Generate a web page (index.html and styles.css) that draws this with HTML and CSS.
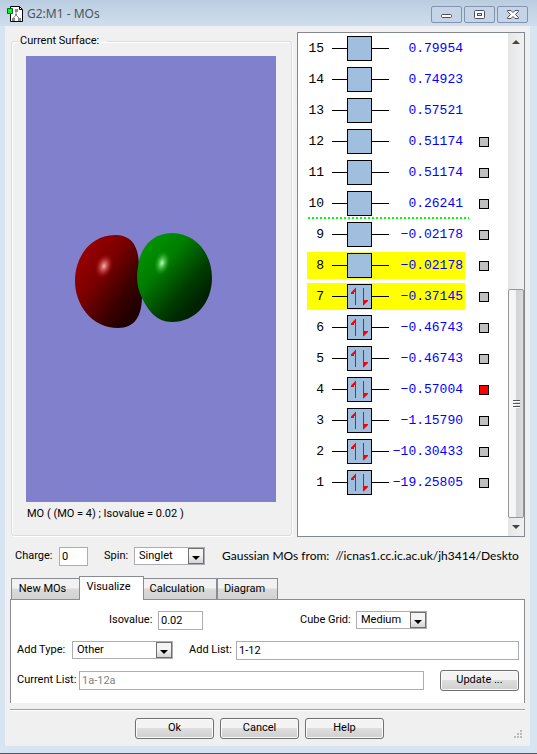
FILE: index.html
```html
<!DOCTYPE html>
<html lang="en">
<head>
<meta charset="utf-8">
<title>G2:M1 - MOs</title>
<link rel="stylesheet" href="styles.css">
</head>
<body>
<div class="window">
  <header class="titlebar">
    <svg class="app-icon" width="17" height="17" viewBox="0 0 17 17" aria-hidden="true">
      <path d="M3.5.5h9l3 3v12h-12z" fill="#fff" stroke="#000"/>
      <path d="M12.500 .5v3h3" fill="none" stroke="#000"/>
      <path d="M9 5v4L5.500 13M9 9l4 4" fill="none" stroke="#888"/>
      <path d="M8 3h3v3H8zM8 8h2v2H8zM5 12h3v3H5zM11 12h3v3h-3z" fill="#888"/>
      <path d="M.5 2.500h5v5h-5z" fill="#0f0" stroke="#063"/>
    </svg>
    <h1 class="title">G2:M1 - MOs</h1>
    <button class="caption" aria-label="Minimize"><svg width="29" height="15" viewBox="0 0 29 15"><rect x="9.500" y="7.500" width="10" height="3" rx="1" fill="#fff" stroke="#4c4f5c"/></svg></button>
    <button class="caption" aria-label="Maximize"><svg width="29" height="15" viewBox="0 0 29 15"><rect x="9.500" y="3.500" width="10" height="8" rx="1" fill="#fff" stroke="#4c4f5c"/><rect x="12.500" y="6.500" width="4" height="2" fill="#dde6f0" stroke="#4c4f5c"/></svg></button>
    <button class="caption" aria-label="Close"><svg width="29" height="15" viewBox="0 0 29 15"><path d="M9.500 3.500h3.500l2 2 2-2h3.500v1l-3 3 3 3v1H17l-2-2-2 2H9.500v-1l3-3-3-3z" fill="#fff" stroke="#4c4f5c"/></svg></button>
  </header>

  <main class="content">
    <section class="views">
      <fieldset class="surface">
        <legend>Current Surface:</legend>
        <svg class="scene" viewBox="0 0 250 446" role="img" aria-label="Orbital surface">
          <defs>
            <linearGradient id="red" x1=".15" y1=".15" x2=".85" y2=".85">
              <stop offset="0" stop-color="#980000"/><stop offset=".35" stop-color="#7c0000"/><stop offset=".75" stop-color="#3c0000"/><stop offset="1" stop-color="#200000"/>
            </linearGradient>
            <linearGradient id="green" x1=".15" y1=".1" x2=".8" y2=".8">
              <stop offset="0" stop-color="#009400"/><stop offset=".35" stop-color="#007c00"/><stop offset=".75" stop-color="#003c00"/><stop offset="1" stop-color="#002200"/>
            </linearGradient>
            <radialGradient id="red-glow"><stop offset="0" stop-color="#ffb0b0"/><stop offset=".4" stop-color="#d86060" stop-opacity=".7"/><stop offset="1" stop-color="#900" stop-opacity="0"/></radialGradient>
            <radialGradient id="green-glow"><stop offset="0" stop-color="#c0ffc0"/><stop offset=".4" stop-color="#60d060" stop-opacity=".7"/><stop offset="1" stop-color="#090" stop-opacity="0"/></radialGradient>
          </defs>
          <rect width="250" height="446" fill="#8080cc"/>
          <path d="M49 225C49 199 66 179 89 179C106 179 112 190 113 208C114 220 116 226 116 240C116 260 109 272 92 272C66 272 49 249 49 225Z" fill="url(#red)"/>
          <path d="M112 211C114 191 127 177 146 177C169 177 186 197 186 222C186 247 169 266 146 266C130 266 122 254 116 242C111 232 110 221 112 211Z" fill="url(#green)"/>
          <ellipse cx="78" cy="210" rx="9" ry="13" transform="rotate(20 78 210)" fill="url(#red-glow)"/>
          <ellipse cx="136" cy="207" rx="8" ry="13" transform="rotate(15 136 207)" fill="url(#green-glow)"/>
        </svg>
        <p class="scene-caption">MO ( (MO = 4) ; Isovalue = 0.02 )</p>
      </fieldset>

      <section class="levels">
        <svg class="defs" width="0" height="0" aria-hidden="true">
          <symbol id="empty" viewBox="0 0 57 25"><path d="M0 12.500h57" stroke="#000"/><rect x="15.500" y=".5" width="24" height="24" fill="#a0bede" stroke="#000"/></symbol>
          <symbol id="pair" viewBox="0 0 57 25"><path d="M0 12.500h57" stroke="#000"/><rect x="15.500" y=".5" width="24" height="24" fill="#a0bede" stroke="#000"/><path d="M23 4h1v17h-1zM31 4h1v17h-1z" fill="red"/><path d="M24 3.500v4.500h-2v2h-3V8.500zM31 21.500V16h5v1l-4 4z" fill="red"/></symbol>
        </svg>
        <ol class="orbitals">
          <li><span class="level"><b>15</b><svg><use href="#empty"/></svg><data>0.79954</data></span></li>
          <li><span class="level"><b>14</b><svg><use href="#empty"/></svg><data>0.74923</data></span></li>
          <li><span class="level"><b>13</b><svg><use href="#empty"/></svg><data>0.57521</data></span></li>
          <li><span class="level"><b>12</b><svg><use href="#empty"/></svg><data>0.51174</data></span><input type="checkbox" aria-label="Orbital 12"></li>
          <li><span class="level"><b>11</b><svg><use href="#empty"/></svg><data>0.51174</data></span><input type="checkbox" aria-label="Orbital 11"></li>
          <li class="divided"><span class="level"><b>10</b><svg><use href="#empty"/></svg><data>0.26241</data></span><input type="checkbox" aria-label="Orbital 10"></li>
          <li><span class="level"><b>9</b><svg><use href="#empty"/></svg><data>−0.02178</data></span><input type="checkbox" aria-label="Orbital 9"></li>
          <li><span class="level marked"><b>8</b><svg><use href="#empty"/></svg><data>−0.02178</data></span><input type="checkbox" aria-label="Orbital 8"></li>
          <li><span class="level marked"><b>7</b><svg><use href="#pair"/></svg><data>−0.37145</data></span><input type="checkbox" aria-label="Orbital 7"></li>
          <li><span class="level"><b>6</b><svg><use href="#pair"/></svg><data>−0.46743</data></span><input type="checkbox" aria-label="Orbital 6"></li>
          <li><span class="level"><b>5</b><svg><use href="#pair"/></svg><data>−0.46743</data></span><input type="checkbox" aria-label="Orbital 5"></li>
          <li><span class="level"><b>4</b><svg><use href="#pair"/></svg><data>−0.57004</data></span><input type="checkbox" aria-label="Orbital 4" checked></li>
          <li><span class="level"><b>3</b><svg><use href="#pair"/></svg><data>−1.15790</data></span><input type="checkbox" aria-label="Orbital 3"></li>
          <li><span class="level"><b>2</b><svg><use href="#pair"/></svg><data>−10.30433</data></span><input type="checkbox" aria-label="Orbital 2"></li>
          <li><span class="level"><b>1</b><svg><use href="#pair"/></svg><data>−19.25805</data></span><input type="checkbox" aria-label="Orbital 1"></li>
        </ol>
        <div class="scrollbar">
          <svg width="16" height="18" viewBox="0 0 16 18"><path d="M8 7l4 4H4z" fill="#444"/></svg>
          <span class="track"><span class="thumb"><i></i><i></i><i></i></span></span>
          <svg width="16" height="18" viewBox="0 0 16 18"><path d="M4 7h8l-4 4z" fill="#444"/></svg>
        </div>
      </section>
    </section>

    <div class="line state">
      <label for="charge">Charge:</label>
      <input class="box charge" id="charge" value="0">
      <label for="spin">Spin:</label>
      <span class="drop"><select id="spin"><option>Singlet</option></select><i></i></span>
      <p class="source">Gaussian MOs from:&nbsp; //icnas1.cc.ic.ac.uk/jh3414/Desktop</p>
    </div>

    <nav class="tabs" role="tablist">
      <button class="tab new" role="tab">New MOs</button>
      <button class="tab current" role="tab" aria-selected="true">Visualize</button>
      <button class="tab calc" role="tab">Calculation</button>
      <button class="tab diagram" role="tab">Diagram</button>
    </nav>

    <section class="panel">
      <div class="line first">
        <label for="iso">Isovalue:</label>
        <input class="box iso" id="iso" value="0.02">
        <label class="grid-label" for="grid">Cube Grid:</label>
        <span class="drop"><select id="grid"><option>Medium</option></select><i></i></span>
      </div>
      <div class="line">
        <label class="add-label" for="type">Add Type:</label>
        <span class="drop wide"><select id="type"><option>Other</option></select><i></i></span>
        <label class="list-label" for="list">Add List:</label>
        <input class="box grow" id="list" value="1-12">
      </div>
      <div class="line">
        <label class="current-label" for="current">Current List:</label>
        <input class="box grow" id="current" value="1a-12a" disabled>
        <button class="push update">Update ...</button>
      </div>
    </section>

    <footer class="actions">
      <button class="push">Ok</button>
      <button class="push">Cancel</button>
      <button class="push">Help</button>
      <svg class="grip" width="9" height="9" viewBox="0 0 9 9" aria-hidden="true"><path d="M6 0h2v2H6zM3 3h2v2H3zM6 3h2v2H6zM0 6h2v2H0zM3 6h2v2H3zM6 6h2v2H6z" fill="#bbb"/></svg>
    </footer>
  </main>
</div>
</body>
</html>
```
FILE: styles.css
```css
* { box-sizing: border-box; }
body {
  margin: 0;
  background: #d7e4f2;
  color: #000;
  font: 11px/14px Roboto, "Liberation Sans", Arial, sans-serif;
}
input, select, button { font: inherit; color: inherit; margin: 0; }
p, h1, ol { margin: 0; padding: 0; }
svg { display: block; }
label { white-space: nowrap; }

.window { border-bottom: 1px solid #50545c; padding: 0 7px 7px 5px; }
.titlebar {
  display: flex;
  align-items: center;
  gap: 2px;
  height: 26px;
  margin: 0 -7px 0 -5px;
  padding: 2px 9px 0 7px;
  background: linear-gradient(#bacde0, #cfdeee);
}
.app-icon { margin-right: 1px; }
.title { flex: 1; font: 12px/16px "Noto Sans", sans-serif; color: #4d5560; }
.caption {
  width: 31px;
  height: 17px;
  padding: 0;
  border: 1px solid #8493ad;
  border-radius: 2px;
  background: #c5d5e7;
}

.content { background: #f0f0f0; padding: 6px 5px 7px; }
.views { display: grid; grid-template-columns: 1fr 228px; gap: 5px; }

.surface {
  min-width: 0;
  margin: 2px 0 1px 1px;
  padding: 8px 15px 14px 14px;
  border: 1px solid #d5dfe5;
  border-radius: 3px;
  box-shadow: inset 1px 1px #fff, 1px 1px #fff;
}
.surface legend { margin-left: -7px; padding: 0 8px 0 1px; }
.scene { width: 100%; }
.scene-caption { padding: 5px 1px 0; }

.levels { display: flex; background: #fff; border: 1px solid #828790; }
.defs { position: absolute; }
.orbitals { flex: 1; padding: 2px 0 0 9px; list-style: none; }
.orbitals li { display: flex; align-items: center; gap: 14px; height: 27px; margin-bottom: 4px; }
.level {
  display: grid;
  grid-template-columns: 17px 57px 1fr;
  column-gap: 8px;
  align-items: center;
  width: 158px;
  height: 27px;
  padding-right: 2px;
  font: 13px/27px "Liberation Mono", monospace;
}
.level b { font-weight: 400; text-align: right; }
.level svg { width: 57px; height: 25px; }
.level data { color: #00f; text-align: right; margin-left: -8px; }
.marked { background: #ff0; }
.divided { position: relative; }
.divided::after {
  content: "";
  position: absolute;
  left: 1px;
  bottom: -2px;
  width: 161px;
  height: 2px;
  background: repeating-linear-gradient(90deg, #0f0 0 2px, transparent 2px 4px);
}
.orbitals input { appearance: none; width: 10px; height: 10px; border: 1px solid #000; background: #c0c0c0; }
.orbitals input:checked { background: #f00; }

.scrollbar { display: flex; flex-direction: column; width: 16px; background: linear-gradient(90deg, #e6e6e6, #f1f1f1); }
.track { flex: 1; display: flex; flex-direction: column; justify-content: flex-end; }
.thumb {
  display: flex;
  flex-direction: column;
  align-items: center;
  justify-content: center;
  gap: 1px;
  height: 49%;
  border: 1px solid #979797;
  border-radius: 2px;
  background: linear-gradient(90deg, #f6f6f6 45%, #d2d2d2 55%, #dcdcdc);
}
.thumb i { width: 7px; height: 2px; border-top: 1px solid #555; background: #fff; }

.line { display: flex; align-items: center; height: 20px; gap: 6px; }
.box {
  min-width: 0;
  height: 19px;
  padding: 0 2px;
  border: 1px solid #abadb3;
  border-radius: 0;
  background: #fff;
}
.box:disabled { color: #808080; }
.grow { flex: 1; }
.drop { position: relative; display: block; width: 71px; height: 18px; }
.drop select {
  appearance: none;
  display: block;
  width: 100%;
  height: 18px;
  padding: 0 18px 1px 4px;
  border: 1px solid #abadb3;
  border-radius: 0;
  background: #fff;
}
.drop i {
  position: absolute;
  top: 1px;
  right: 1px;
  display: grid;
  place-items: center;
  width: 16px;
  height: 16px;
  border: 1px solid #707070;
  background: linear-gradient(#f4f4f4 45%, #d4d4d4);
  pointer-events: none;
}
.drop i::after { content: ""; margin-top: 3px; border: 4px solid transparent; border-top-color: #000; border-bottom: 0; }
.wide { width: 101px; }

.state { margin: 9px 6px 10px 5px; }
.state .charge { width: 29px; margin-right: 10px; }
.state label[for="charge"] { width: 38px; }
.state label[for="spin"] { width: 24px; }
.source { flex: 1; margin-left: 11px; overflow: hidden; white-space: nowrap; font: 12px/18px Lato, "Noto Sans", sans-serif; }

.tabs { display: flex; align-items: flex-end; padding-left: 1px; }
.tab {
  height: 21px;
  padding: 0 0 1px;
  border: 1px solid #898c95;
  border-bottom: 0;
  border-radius: 0;
  background: linear-gradient(#f2f2f2 45%, #dadada 50%, #d2d2d2);
}
.new { width: 69px; padding-right: 6px; }
.current { position: relative; width: 65px; height: 24px; margin: 0 -1px -1px; padding: 0 6px 3px 0; background: #fff; }
.calc { width: 74px; padding-right: 6px; }
.diagram { width: 61px; padding-right: 6px; }

.panel {
  display: flex;
  flex-direction: column;
  gap: 10px;
  padding: 10px 5px 13px 6px;
  border: 1px solid #898c95;
  border-bottom: 0;
  background: #fff;
}
.first { padding-left: 92px; }
.first label { width: 43px; }
.iso { width: 45px; margin-right: 91px; }
.first .grid-label { width: 50px; }
.add-label { width: 49px; }
.list-label { width: 41px; margin-left: 10px; }
.current-label { width: 56px; }

.push {
  width: 79px;
  height: 21px;
  padding: 0 0 1px;
  border: 1px solid #707070;
  border-radius: 3px;
  background: linear-gradient(#f3f3f3 45%, #dedede 50%, #cfcfcf);
  box-shadow: inset 0 0 0 1px #fafafa;
}
.update { margin: 0 0 0 10px; }
.actions {
  position: relative;
  display: flex;
  justify-content: center;
  gap: 6px;
  margin-top: 6px;
  padding: 8px 16px 0 0;
  border-top: 1px solid #a0a0a0;
  box-shadow: inset 0 1px #fff;
}
.grip { position: absolute; right: 2px; bottom: 0; }
```
